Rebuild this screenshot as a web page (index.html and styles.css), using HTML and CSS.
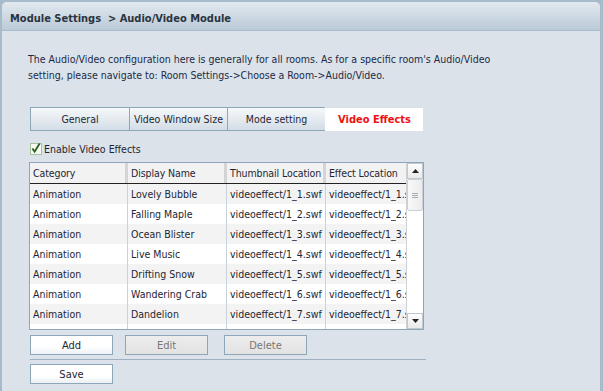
FILE: index.html
```html
<!DOCTYPE html>
<html>
<head>
<meta charset="utf-8">
<link rel="stylesheet" href="styles.css">
</head>
<body>
<div class="panel">
  <div class="header">Module Settings&nbsp;&nbsp;&gt; Audio/Video Module</div>
  <div class="content">
    <p class="desc">The Audio/Video configuration here is generally for all rooms. As for a specific room's Audio/Video<br>setting, please navigate to: Room Settings-&gt;Choose a Room-&gt;Audio/Video.</p>
    <div class="tabs">
      <div class="tab">General</div>
      <div class="tab">Video Window Size</div>
      <div class="tab">Mode setting</div>
      <div class="tab active">Video Effects</div>
    </div>
    <label class="check"><span class="box"><svg width="11" height="12" viewBox="0 0 11 12"><path d="M1.5 6.5 L4 10 L9.5 1" fill="none" stroke="#2b5d1e" stroke-width="2"/></svg></span>Enable Video Effects</label>
    <div class="grid">
      <div class="gmain">
        <div class="ghead">
          <div class="hc">Category</div>
          <div class="hc">Display Name</div>
          <div class="hc">Thumbnail Location</div>
          <div class="hc last">Effect Location</div>
        </div>
        <div class="row alt"><div class="c">Animation</div><div class="c">Lovely Bubble</div><div class="c">videoeffect/1_1.swf</div><div class="c last">videoeffect/1_1.swf</div></div>
        <div class="row"><div class="c">Animation</div><div class="c">Falling Maple</div><div class="c">videoeffect/1_2.swf</div><div class="c last">videoeffect/1_2.swf</div></div>
        <div class="row alt"><div class="c">Animation</div><div class="c">Ocean Blister</div><div class="c">videoeffect/1_3.swf</div><div class="c last">videoeffect/1_3.swf</div></div>
        <div class="row"><div class="c">Animation</div><div class="c">Live Music</div><div class="c">videoeffect/1_4.swf</div><div class="c last">videoeffect/1_4.swf</div></div>
        <div class="row alt"><div class="c">Animation</div><div class="c">Drifting Snow</div><div class="c">videoeffect/1_5.swf</div><div class="c last">videoeffect/1_5.swf</div></div>
        <div class="row"><div class="c">Animation</div><div class="c">Wandering Crab</div><div class="c">videoeffect/1_6.swf</div><div class="c last">videoeffect/1_6.swf</div></div>
        <div class="row alt"><div class="c">Animation</div><div class="c">Dandelion</div><div class="c">videoeffect/1_7.swf</div><div class="c last">videoeffect/1_7.swf</div></div>
        <div class="row"><div class="c"></div><div class="c"></div><div class="c"></div><div class="c last"></div></div>
      </div>
      <div class="sbar">
        <div class="sbtn"><svg width="7" height="4" viewBox="0 0 7 4"><path d="M0 4 L3.5 0 L7 4Z" fill="#222"/></svg></div>
        <div class="thumb"><span></span><span></span><span></span></div>
        <div class="track"></div>
        <div class="sbtn"><svg width="7" height="4" viewBox="0 0 7 4"><path d="M0 0 L3.5 4 L7 0Z" fill="#222"/></svg></div>
      </div>
    </div>
    <div class="btns">
      <button class="btn">Add</button>
      <button class="btn dis">Edit</button>
      <button class="btn dis">Delete</button>
    </div>
    <div class="sep"></div>
    <div class="btns save"><button class="btn">Save</button></div>
  </div>
</div>
</body>
</html>
```
FILE: styles.css
```css
html, body { margin: 0; padding: 0; }
body {
  background: #a8bbcb;
  width: 603px;
  height: 391px;
  overflow: hidden;
  font-family: "DejaVu Sans Condensed", "Liberation Sans", sans-serif;
  font-size: 10.5px;
  color: #1e2633;
}
.panel {
  margin: 2px 3px 0 2px;
  height: 389px;
  background: #dbe2e9;
  border-radius: 5px 5px 0 0;
  display: flex;
  flex-direction: column;
}
.header {
  height: 29px;
  box-sizing: border-box;
  padding: 10px 0 0 8px;
  font-weight: bold;
  font-size: 11px;
  color: #2a3340;
  border-radius: 5px 5px 0 0;
  background: linear-gradient(#e2e9ef, #bacad7);
  border-bottom: 1px solid #aabccb;
}
.content {
  padding: 0 0 0 26px;
  display: flex;
  flex-direction: column;
}
.desc {
  margin: 20px 0 0 0;
  line-height: 16px;
  color: #1b2a45;
}
.tabs {
  margin: 24px 0 0 2px;
  display: flex;
  width: 394px;
}
.tab {
  width: 98px;
  height: 24px;
  box-sizing: border-box;
  border: 1px solid #8ea6ba;
  border-right: none;
  background: linear-gradient(#f6f8fa, #d3dde6);
  text-align: center;
  line-height: 23px;
  color: #1e2633;
}
.tab:first-child { width: 99px; }
.tab.active {
  background: #fff;
  color: #ee1111;
  font-weight: bold;
  font-size: 11px;
  border-color: #fff;
  border-top: 1px solid #d8e0e7;
}
.check {
  margin: 11px 0 0 2px;
  display: flex;
  align-items: center;
  height: 14px;
  color: #1e2633;
}
.box {
  width: 12px;
  height: 12px;
  box-sizing: border-box;
  border: 1px solid #a7c39e;
  background: #f4f9f2;
  margin-right: 2px;
  display: flex;
  align-items: center;
  justify-content: center;
}
.box svg { margin-top: -3px; }
.grid {
  margin: 6px 0 0 1px;
  width: 395px;
  height: 168px;
  box-sizing: border-box;
  border: 1px solid #8ea6ba;
  background: #fff;
  display: flex;
  overflow: hidden;
}
.gmain { flex: 1; overflow: hidden; }
.ghead {
  display: grid;
  grid-template-columns: 98px 99px 99px 1fr;
  height: 21px;
  background: #f2f2f2;
  border-bottom: 1px solid #222;
  box-sizing: border-box;
}
.hc {
  padding-left: 3px;
  line-height: 20px;
  border-right: 3px solid #d4d4d4;
  white-space: nowrap;
  letter-spacing: -0.1px;
}
.hc.last { border-right: none; overflow: hidden; }
.row {
  display: grid;
  grid-template-columns: 98px 99px 99px 1fr;
  height: 20px;
  background: #fff;
}
.row.alt { background: #f3f3f3; }
.c {
  padding-left: 3px;
  line-height: 20px;
  border-right: 1px solid #c9d2dc;
  white-space: nowrap;
  overflow: hidden;
}
.c.last { border-right: none; }
.sbar {
  width: 16px;
  display: flex;
  flex-direction: column;
  background: #fff;
  border-left: 1px solid #ccd2d8;
}
.sbtn {
  height: 16px;
  box-sizing: border-box;
  border: 1px solid #bfc7cf;
  background: linear-gradient(#fdfdfd, #eaeaea);
  display: flex;
  align-items: center;
  justify-content: center;
}
.thumb {
  height: 32px;
  box-sizing: border-box;
  border: 1px solid #c9d0d7;
  border-radius: 2px;
  background: linear-gradient(90deg, #f8f8f8, #ececec);
  display: flex;
  flex-direction: column;
  align-items: center;
  justify-content: center;
  gap: 1px;
}
.thumb span { width: 6px; height: 1px; background: #a8adb3; }
.track { flex: 1; }
.btns {
  display: flex;
  gap: 12px;
  margin: 5px 0 0 2px;
}
.btns.save { margin-top: 4px; }
.btns .btn:nth-child(3) { margin-left: 4px; }
.btn {
  width: 83px;
  height: 20px;
  box-sizing: border-box;
  border: 1px solid #8ea6ba;
  background: linear-gradient(#ffffff 60%, #ecf0f4);
  font-family: inherit;
  font-size: 11px;
  color: #1e2633;
  padding: 0;
}
.btn.dis {
  background: linear-gradient(#ededed, #e2e2e2);
  color: #777;
}
.sep {
  margin: 4px 0 0 2px;
  width: 396px;
  height: 1px;
  background: #9fb1c0;
}
```
